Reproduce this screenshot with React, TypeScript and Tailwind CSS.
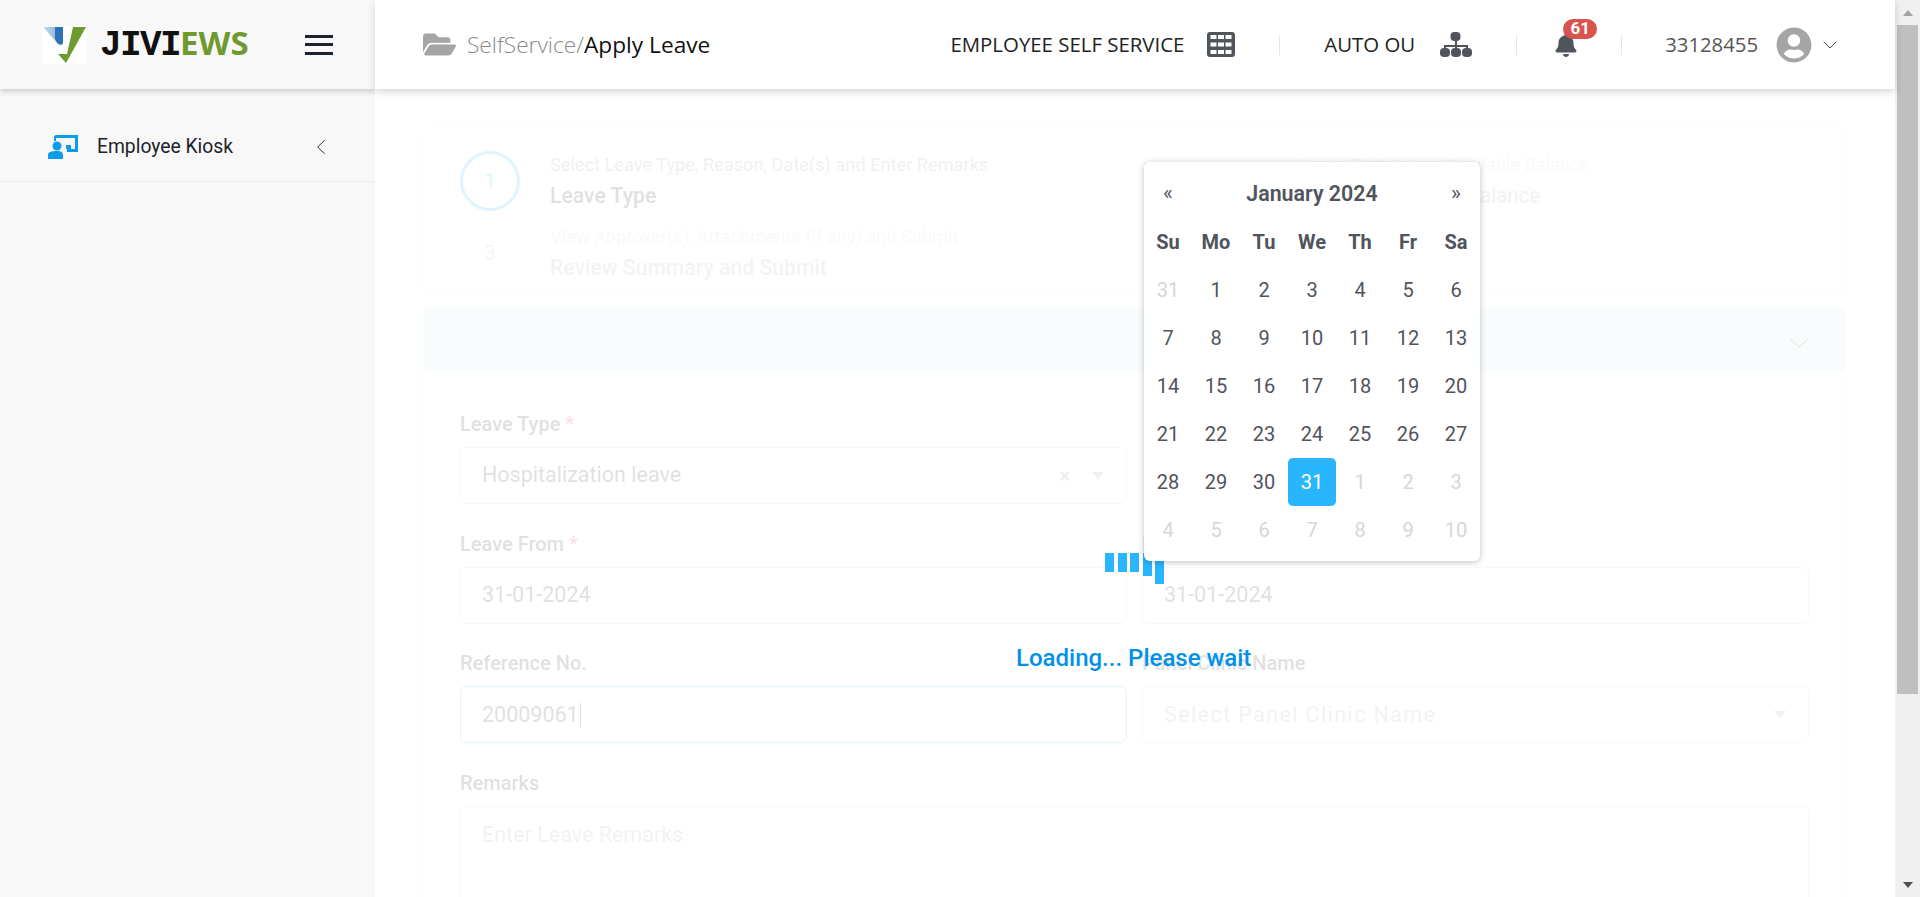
import { FaBell, FaFolderOpen, FaUserCircle } from "react-icons/fa";
import { ChevronDown, ChevronLeft } from "lucide-react";

const week = ["Su", "Mo", "Tu", "We", "Th", "Fr", "Sa"];
const days: [string, boolean][] = [
  ["31", true], ...Array.from({ length: 30 }, (_, i): [string, boolean] => [String(i + 1), false]),
  ["31", false], ["1", true], ["2", true], ["3", true], ["4", true], ["5", true], ["6", true], ["7", true], ["8", true], ["9", true], ["10", true],
];

function Logo() {
  return (
    <div className="flex items-center">
      <svg width="45" height="38" viewBox="0 0 45 38" className="bg-white">
        <defs>
          <linearGradient id="pale" x1="0" y1="0" x2="1" y2="0">
            <stop offset="0" stopColor="#c9dcea" />
            <stop offset="1" stopColor="#7fb0d6" />
          </linearGradient>
        </defs>
        <path d="M1 1H13V13L18 20Z" fill="url(#pale)" />
        <path d="M13 1H21V16C21 21 15 19 13 13Z" fill="#2b72b8" />
        <path d="M31 1H44L24 37L16 28H25Z" fill="#6f9a2f" />
      </svg>
      <div className="ml-[13px] flex items-baseline font-bold leading-none">
        <span className="font-['Liberation_Mono',monospace] text-[36px] tracking-[-1.6px] text-[#111]">JIVI</span>
        <span className="font-['Open_Sans',sans-serif] text-[33px] text-[#6f9a2f]">EWS</span>
      </div>
    </div>
  );
}

function Field({ label, req, value, muted, focus, arrow, clear, spaced }: { label: string; req?: boolean; value: string; muted?: boolean; focus?: boolean; arrow?: boolean; clear?: boolean; spaced?: boolean }) {
  return (
    <div className="min-w-0">
      <div className="h-[22px] text-[20px] leading-[22px] font-medium text-[#333]">
        {label} {req && <span className="text-[#dc3545]">*</span>}
      </div>
      <div className={`mt-[12px] flex h-[57px] items-center rounded-[6px] border px-[21px] text-[21.5px] ${focus ? "border-[#29b6f6]" : "border-[#d5d5d5]"} ${muted ? "text-[#aaa]" : "text-[#333]"}`}>
        <span className={spaced ? "tracking-[1.4px]" : ""}>{value}</span>
        {focus && <span className="ml-px h-[24px] w-px bg-[#333]" />}
        <span className="flex-1" />
        {clear && <span className="mr-[22px] text-[20px] font-bold text-[#888]">×</span>}
        {arrow && <span className="mr-[1px] h-0 w-0 border-x-[6px] border-t-[7px] border-x-transparent border-t-[#999]" />}
      </div>
    </div>
  );
}

function Step({ n, sub, title, active, dim, tight }: { n: string; sub: string; title: string; active?: boolean; dim?: boolean; tight?: boolean }) {
  return (
    <div className="flex h-[60px] items-center gap-[30px]">
      <div className={`flex h-[60px] w-[60px] shrink-0 items-center justify-center rounded-full border-[3px] text-[20px] ${active ? "border-[#29b6f6] text-[#29b6f6]" : "border-transparent text-[#bbb]"}`}>{n}</div>
      <div className={dim ? "opacity-40" : ""}>
        <div className="text-[18.2px] leading-[20px] text-[#999]">{sub}</div>
        <div className={`mt-[10px] text-[21.2px] leading-[22px] font-medium text-[#333] ${tight ? "tracking-[-0.3px]" : ""}`}>{title}</div>
      </div>
    </div>
  );
}

export default function App() {
  return (
    <div className="flex h-[897px] overflow-hidden bg-white font-['Roboto',sans-serif]">
      <aside className="w-[375px] shrink-0 bg-[#f8f8f8]">
        <div className="flex h-[89px] items-center justify-between pl-[42px] pr-[42px] shadow-[0_2px_6px_rgba(0,0,0,0.2)]">
          <Logo />
          <div className="flex w-[28px] flex-col gap-[5.5px]">
            <span className="h-[3px] bg-[#1a2233]" />
            <span className="h-[3px] bg-[#1a2233]" />
            <span className="h-[3px] bg-[#1a2233]" />
          </div>
        </div>
        <div className="mt-[24px] flex h-[69px] items-center border-b border-[#ececec] pl-[48px] pr-[41px]">
          <svg width="30" height="24" viewBox="0 0 30 24" fill="#0d9cec">
            <path d="M8 0H30V17H19V14H27V3H8V6H6V2C6 1 7 0 8 0Z" />
            <circle cx="9" cy="11" r="4.5" />
            <path d="M0 24V20C0 17 3 16 9 16C15 16 15 18 15 24Z" />
            <path d="M18 10H23V14H18Z" />
          </svg>
          <span className="ml-[19px] flex-1 text-[19.3px] text-[#20232a]">Employee Kiosk</span>
          <ChevronLeft size={26} strokeWidth={0.9} className="text-[#222]" />
        </div>
      </aside>

      <div className="relative min-w-0 flex-1">
        <header className="relative z-20 flex h-[89px] items-center bg-white pl-[48px] shadow-[0_3px_8px_rgba(0,0,0,0.16)]">
          <FaFolderOpen size={33} className="text-[#a5a5a6]" />
          <div className="ml-[11px] mt-[2px] font-['Open_Sans',sans-serif] text-[22.7px] text-[#111]">
            <span className="font-light text-[#8a8a8a]">SelfService/</span>Apply Leave
          </div>
          <div className="flex-1" />
          <div className="font-['Open_Sans',sans-serif] text-[20.4px] text-[#222]">EMPLOYEE SELF SERVICE</div>
          <svg width="28" height="25" viewBox="0 0 28 25" className="ml-[23px]">
            <rect width="28" height="25" rx="3" fill="#50545b" />
            {[3, 10.5, 18].map((y) =>
              [3.5, 11, 18.5].map((x) => <rect key={`${x}-${y}`} x={x} y={y} width="6" height="4" fill="#fff" />),
            )}
          </svg>
          <span className="ml-[44px] h-[20px] w-px bg-[#e5e5e5]" />
          <div className="ml-[44px] font-['Open_Sans',sans-serif] text-[20.4px] text-[#222]">AUTO OU</div>
          <svg width="32" height="25" viewBox="0 0 32 25" fill="#50545b" className="ml-[25px]">
            <rect x="10.5" y="0" width="10" height="9" rx="4" />
            <rect x="15" y="8" width="2" height="8" />
            <path d="M4 19V13H28V19H26V15H6V19Z" />
            <rect x="15" y="13" width="2" height="4" />
            <rect x="0" y="16" width="10" height="9" rx="4" />
            <rect x="11" y="16" width="10" height="9" rx="4" />
            <rect x="22" y="16" width="10" height="9" rx="4" />
          </svg>
          <span className="ml-[44px] h-[20px] w-px bg-[#e5e5e5]" />
          <div className="relative ml-[37px] h-[24px] w-[24px]">
            <FaBell size={24} className="text-[#50545b]" />
            <span className="absolute left-[9px] top-[-14px] flex h-[20px] w-[34px] items-center justify-center rounded-full bg-[#d9534f] text-[17px] font-bold text-white">61</span>
          </div>
          <span className="ml-[43px] h-[20px] w-px bg-[#e5e5e5]" />
          <div className="ml-[43px] font-['Open_Sans',sans-serif] text-[20.3px] text-[#555]">33128455</div>
          <FaUserCircle size={36} className="ml-[18px] text-[#a5a5a6]" />
          <ChevronDown size={24} strokeWidth={1} className="ml-[6px] mr-[53px] text-[#444]" />
        </header>

        <main className="relative h-[808px] overflow-hidden px-[48px] pt-[38px]">
          <section className="h-[167px] w-[1423px] rounded-[6px] border border-[#e8e8e8] pl-[36px] pt-[23px]">
            <div className="grid grid-cols-[750px_1fr]">
              <Step n="1" sub="Select Leave Type, Reason, Date(s) and Enter Remarks" title="Leave Type" active />
              <Step n="2" sub="Leave Details and Available Balance" title="Leave Details and Balance" dim tight />
            </div>
            <div className="mt-[12px]">
              <Step n="3" sub="View Approver(s), Attachments (if any) and Submit" title="Review Summary and Submit" dim />
            </div>
          </section>

          <section className="mt-[13px] w-[1423px] rounded-t-[6px] border border-b-0 border-[#e8e8e8]">
            <div className="flex h-[64px] items-center justify-end bg-[#d5e8ed] pr-[29px]">
              <ChevronDown size={34} strokeWidth={0.75} className="mt-[6px] text-[#777]" />
            </div>
            <div className="grid grid-cols-2 gap-x-[15px] gap-y-[28.6px] pl-[36px] pr-[36px] pt-[41px]">
              <Field label="Leave Type" req value="Hospitalization leave" arrow clear />
              <div />
              <Field label="Leave From" req value="31-01-2024" />
              <Field label="Leave To" req value="31-01-2024" />
              <Field label="Reference No." value="20009061" focus />
              <Field label="Panel Clinic Name" value="Select Panel Clinic Name" muted arrow spaced />
              <div className="col-span-2">
                <div className="h-[22px] text-[20px] leading-[22px] font-medium text-[#333]">Remarks</div>
                <div className="mt-[12px] h-[140px] rounded-[6px] border border-[#d5d5d5] px-[21px] py-[12px] text-[21.5px] text-[#aaa]">Enter Leave Remarks</div>
              </div>
            </div>
          </section>

          <div className="absolute inset-0 bg-white/85" />

          <div className="absolute left-[730px] top-[464px] flex items-start gap-[3.5px]">
            <span className="h-[19px] w-[9px] bg-[#29b6ff]" />
            <span className="h-[19px] w-[9px] bg-[#29b6ff]" />
            <span className="h-[19px] w-[9px] bg-[#29b6ff]" />
            <span className="h-[23px] w-[9px] bg-[#29b6ff]" />
            <span className="h-[31px] w-[9px] bg-[#29b6ff]" />
          </div>
          <div className="absolute left-[641px] top-[556px] text-[24px] leading-[26px] font-medium text-[#0091ea]">Loading... Please wait</div>

          <div className="absolute left-[769px] top-[73px] h-[399px] w-[336px] rounded-[6px] bg-white pt-[8px] text-[20px] text-[#50545b] shadow-[0_1px_6px_rgba(0,0,0,0.25)]">
            <div className="grid h-[48px] grid-cols-[48px_1fr_48px] items-center text-center">
              <span className="text-[21px]">«</span>
              <span className="text-[21.4px] font-semibold">January 2024</span>
              <span className="text-[21px]">»</span>
            </div>
            <div className="grid grid-cols-[repeat(7,48px)] justify-center">
              {week.map((d) => (
                <div key={d} className="flex h-[48px] items-center justify-center font-bold">{d}</div>
              ))}
              {days.map(([d, off], i) => (
                <div key={i} className={`flex h-[48px] items-center justify-center rounded-[5px] ${off ? "text-[#d6d6d6]" : ""} ${d === "31" && !off ? "bg-[#29b6ff] text-white" : ""}`}>{d}</div>
              ))}
            </div>
          </div>
        </main>
      </div>

      <div className="flex w-[25px] shrink-0 flex-col items-center bg-[#f0f0f0]">
        <div className="flex h-[25px] items-center justify-center">
          <span className="h-0 w-0 border-x-[5px] border-b-[6px] border-x-transparent border-b-[#a3a3a3]" />
        </div>
        <div className="h-[669px] w-[21px] bg-[#bfbfbf]" />
        <div className="flex-1" />
        <div className="flex h-[25px] items-center justify-center">
          <span className="h-0 w-0 border-x-[5px] border-t-[6px] border-x-transparent border-t-[#505050]" />
        </div>
      </div>
    </div>
  );
}
